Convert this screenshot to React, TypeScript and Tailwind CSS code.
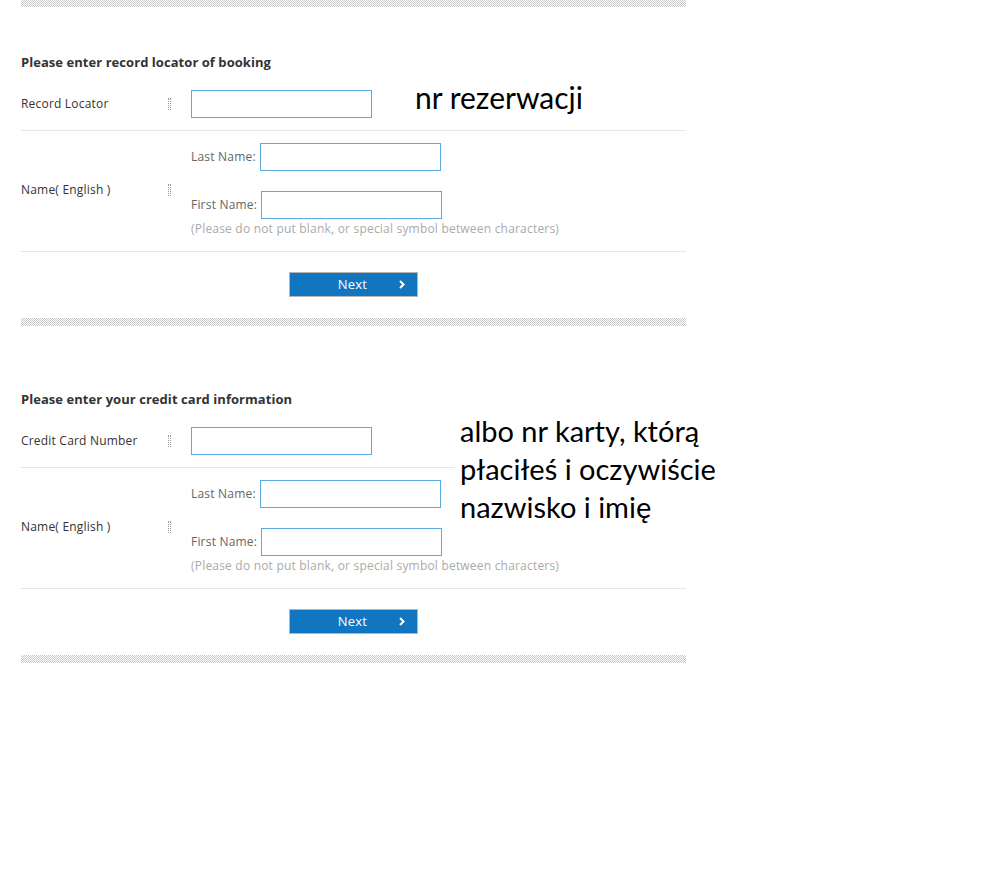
import React from "react";

const stripe =
  "bg-[repeating-conic-gradient(#c9c9c9_0_25%,#ffffff_0_50%)] bg-[length:2px_2px]";

function Handle() {
  return <span className="block h-[12px] w-[3px] border-x border-dotted border-[#9a9a9a]" />;
}

function TextBox() {
  return (
    <input
      type="text"
      className="h-[28px] w-[181px] border border-[#5aace0] bg-white px-1 outline-none"
    />
  );
}

function Row({ label, children, className = "" }: { label: string; children: React.ReactNode; className?: string }) {
  return (
    <div className={`flex items-center border-b border-[#e6e6e6] ${className}`}>
      <div className="w-[147px] text-[12px] text-[#333]">{label}</div>
      <Handle />
      <div className="ml-[20px]">{children}</div>
    </div>
  );
}

function Section({ heading, firstLabel, top }: { heading: string; firstLabel: string; top: string }) {
  return (
    <section className={top}>
      <h2 className="text-[13px] font-bold leading-[18px] tracking-[0.05px] text-[#333]">{heading}</h2>
      <Row label={firstLabel} className="pt-[19px] pb-[12px]">
        <TextBox />
      </Row>
      <Row label="Name( English )" className="pt-[12px] pb-[14px]">
        <div className="flex flex-col text-[12px] text-[#666]">
          <label className="flex items-center gap-[4px]">
            Last Name:
            <TextBox />
          </label>
          <label className="mt-[20px] flex items-center gap-[4px]">
            First Name:
            <TextBox />
          </label>
          <p className="mt-[2px] leading-[16px] text-[#aaa]">
            (Please do not put blank, or special symbol between characters)
          </p>
        </div>
      </Row>
      <div className="flex justify-center pt-[20px] pb-[21px]">
        <button className="relative flex h-[25px] w-[129px] items-center justify-center border border-[#b5b5b5] bg-[#1275c0] pr-[2px] text-[13px] text-white">
          Next
          <svg className="absolute right-[12px] top-[7px]" width="6" height="9" viewBox="0 0 6 9">
            <path d="M1 1l3.5 3.5L1 8" fill="none" stroke="white" strokeWidth="2" />
          </svg>
        </button>
      </div>
      <div className={`h-[8px] ${stripe}`} />
    </section>
  );
}

export default function App() {
  return (
    <div className="relative min-h-[892px] w-[1001px] bg-white font-['Open_Sans',sans-serif]">
      <div className="ml-[21px] w-[665px] tracking-[0.2px]">
        <div className={`h-[7px] ${stripe}`} />
        <Section heading="Please enter record locator of booking" firstLabel="Record Locator" top="mt-[46px]" />
        <Section heading="Please enter your credit card information" firstLabel="Credit Card Number" top="mt-[64px]" />
      </div>

      <p className="absolute left-[415px] top-[79px] font-['Lato',sans-serif] text-[30px] leading-[37px] text-black">
        nr rezerwacji
      </p>
      <p className="absolute left-[455px] top-[412px] bg-white pl-[5px] pr-[10px] font-['Lato',sans-serif] text-[29px] leading-[38px] text-black">
        albo nr karty, którą
        <br />
        płaciłeś i oczywiście
        <br />
        nazwisko i imię
      </p>
    </div>
  );
}
